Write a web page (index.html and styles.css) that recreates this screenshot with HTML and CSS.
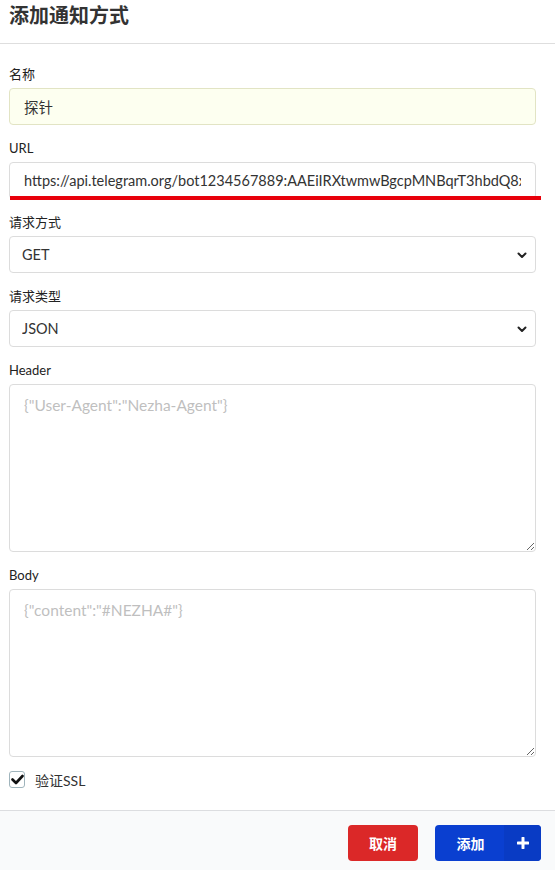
FILE: index.html
```html
<!DOCTYPE html>
<html lang="zh">
<head>
<meta charset="utf-8">
<title>添加通知方式</title>
<link rel="stylesheet" href="styles.css">
</head>
<body>
<div class="modal">
  <div class="modal-header">添加通知方式</div>
  <form class="modal-content">
    <div class="field">
      <label class="label">名称</label>
      <input class="input input-filled" type="text" value="探针">
    </div>
    <div class="field field-url">
      <label class="label">URL</label>
      <input class="input" type="text" value="https://api.telegram.org/bot1234567889:AAEiIRXtwmwBgcpMNBqrT3hbdQ8xNev26tq">
      <span class="mark"></span>
    </div>
    <div class="field">
      <label class="label">请求方式</label>
      <div class="select-wrap">
        <select class="input select"><option>GET</option><option>POST</option></select>
        <svg class="chev" width="10" height="7" viewBox="0 0 10 7"><path d="M1.5 1.5 L5 5 L8.5 1.5" fill="none" stroke="#222" stroke-width="2" stroke-linecap="round" stroke-linejoin="round"/></svg>
      </div>
    </div>
    <div class="field">
      <label class="label">请求类型</label>
      <div class="select-wrap">
        <select class="input select"><option>JSON</option><option>FORM</option></select>
        <svg class="chev" width="10" height="7" viewBox="0 0 10 7"><path d="M1.5 1.5 L5 5 L8.5 1.5" fill="none" stroke="#222" stroke-width="2" stroke-linecap="round" stroke-linejoin="round"/></svg>
      </div>
    </div>
    <div class="field">
      <label class="label">Header</label>
      <textarea class="input textarea" placeholder='{"User-Agent":"Nezha-Agent"}'></textarea>
    </div>
    <div class="field">
      <label class="label">Body</label>
      <textarea class="input textarea" placeholder='{"content":"#NEZHA#"}'></textarea>
    </div>
    <div class="check-row">
      <span class="checkbox">
        <svg width="13" height="11" viewBox="0 0 13 11"><path d="M1.5 5.5 L5 9 L11.5 2" fill="none" stroke="#111" stroke-width="2.6" stroke-linecap="round" stroke-linejoin="round"/></svg>
      </span>
      <span class="check-label">验证SSL</span>
    </div>
  </form>
  <div class="modal-actions">
    <button class="btn btn-red" type="button">取消</button>
    <button class="btn btn-blue" type="button"><span class="btn-text">添加</span><span class="btn-icon"><svg width="12" height="12" viewBox="0 0 12 12"><path d="M6 1 V11 M1 6 H11" stroke="#fff" stroke-width="3" stroke-linecap="round"/></svg></span></button>
  </div>
</div>
</body>
</html>
```
FILE: styles.css
```css
html, body {
  margin: 0;
  padding: 0;
  background: #ffffff;
}
body {
  font-family: Lato, "Noto Sans CJK SC", sans-serif;
  color: #333333;
  width: 555px;
  overflow: hidden;
}
.modal {
  display: flex;
  flex-direction: column;
  min-height: 870px;
}
.modal-header {
  height: 44px;
  box-sizing: border-box;
  padding: 1px 0 0 9px;
  font-size: 20px;
  line-height: 28px;
  font-weight: 700;
  color: #333;
  border-bottom: 1px solid #dedede;
}
.modal-content {
  display: flex;
  flex-direction: column;
  gap: 14px;
  padding: 21px 19px 22px 9px;
  margin: 0;
}
.field {
  display: flex;
  flex-direction: column;
}
.field-url {
  position: relative;
}
.label {
  font-size: 13px;
  line-height: 18px;
  margin-bottom: 5px;
  color: #222;
}
.input {
  box-sizing: border-box;
  width: 100%;
  height: 37px;
  border: 1px solid #dcdcdc;
  border-radius: 4px;
  background: #ffffff;
  font-family: Lato, "Noto Sans CJK SC", sans-serif;
  font-size: 14.5px;
  color: #333;
  padding: 0 14px;
  outline: none;
  margin: 0;
}
.input-filled {
  background: #fdfff0;
  border-color: #e2e4c4;
}
.mark {
  position: absolute;
  left: 1px;
  right: -5px;
  bottom: -1px;
  height: 4px;
  background: #e8000b;
}
.select-wrap {
  position: relative;
}
.select {
  appearance: none;
  -webkit-appearance: none;
  padding-left: 12px;
  cursor: pointer;
}
.chev {
  position: absolute;
  right: 9px;
  top: 16px;
  pointer-events: none;
}
.textarea {
  height: 168px;
  padding: 9px 14px;
  resize: vertical;
  line-height: 22px;
  font-size: 15.5px;
}
.textarea::placeholder {
  color: #bfbfbf;
}
.check-row {
  display: flex;
  align-items: center;
  gap: 10px;
  height: 17px;
}
.checkbox {
  box-sizing: border-box;
  width: 16px;
  height: 17px;
  border: 1px solid #9fb4bc;
  border-radius: 3px;
  display: flex;
  align-items: center;
  justify-content: center;
}
.check-label {
  font-size: 14px;
  color: #333;
}
.modal-actions {
  flex: 1;
  background: #f9fafb;
  border-top: 1px solid #dcdde0;
  display: flex;
  justify-content: flex-end;
  align-items: flex-start;
  gap: 17px;
  padding: 14px 14px 0 0;
}
.btn {
  height: 36px;
  border: none;
  border-radius: 4px;
  color: #fff;
  font-family: Lato, "Noto Sans CJK SC", sans-serif;
  font-size: 14px;
  font-weight: 700;
  padding: 0;
  display: flex;
  align-items: center;
}
.btn-red {
  width: 70px;
  background: #db2828;
  justify-content: center;
}
.btn-blue {
  width: 106px;
  background: #0a3fd0;
  overflow: hidden;
}
.btn-text {
  flex: 1;
  text-align: center;
  padding-left: 2px;
}
.btn-icon {
  width: 37px;
  height: 36px;
  background: #093bc4;
  display: flex;
  align-items: center;
  justify-content: center;
}
```
